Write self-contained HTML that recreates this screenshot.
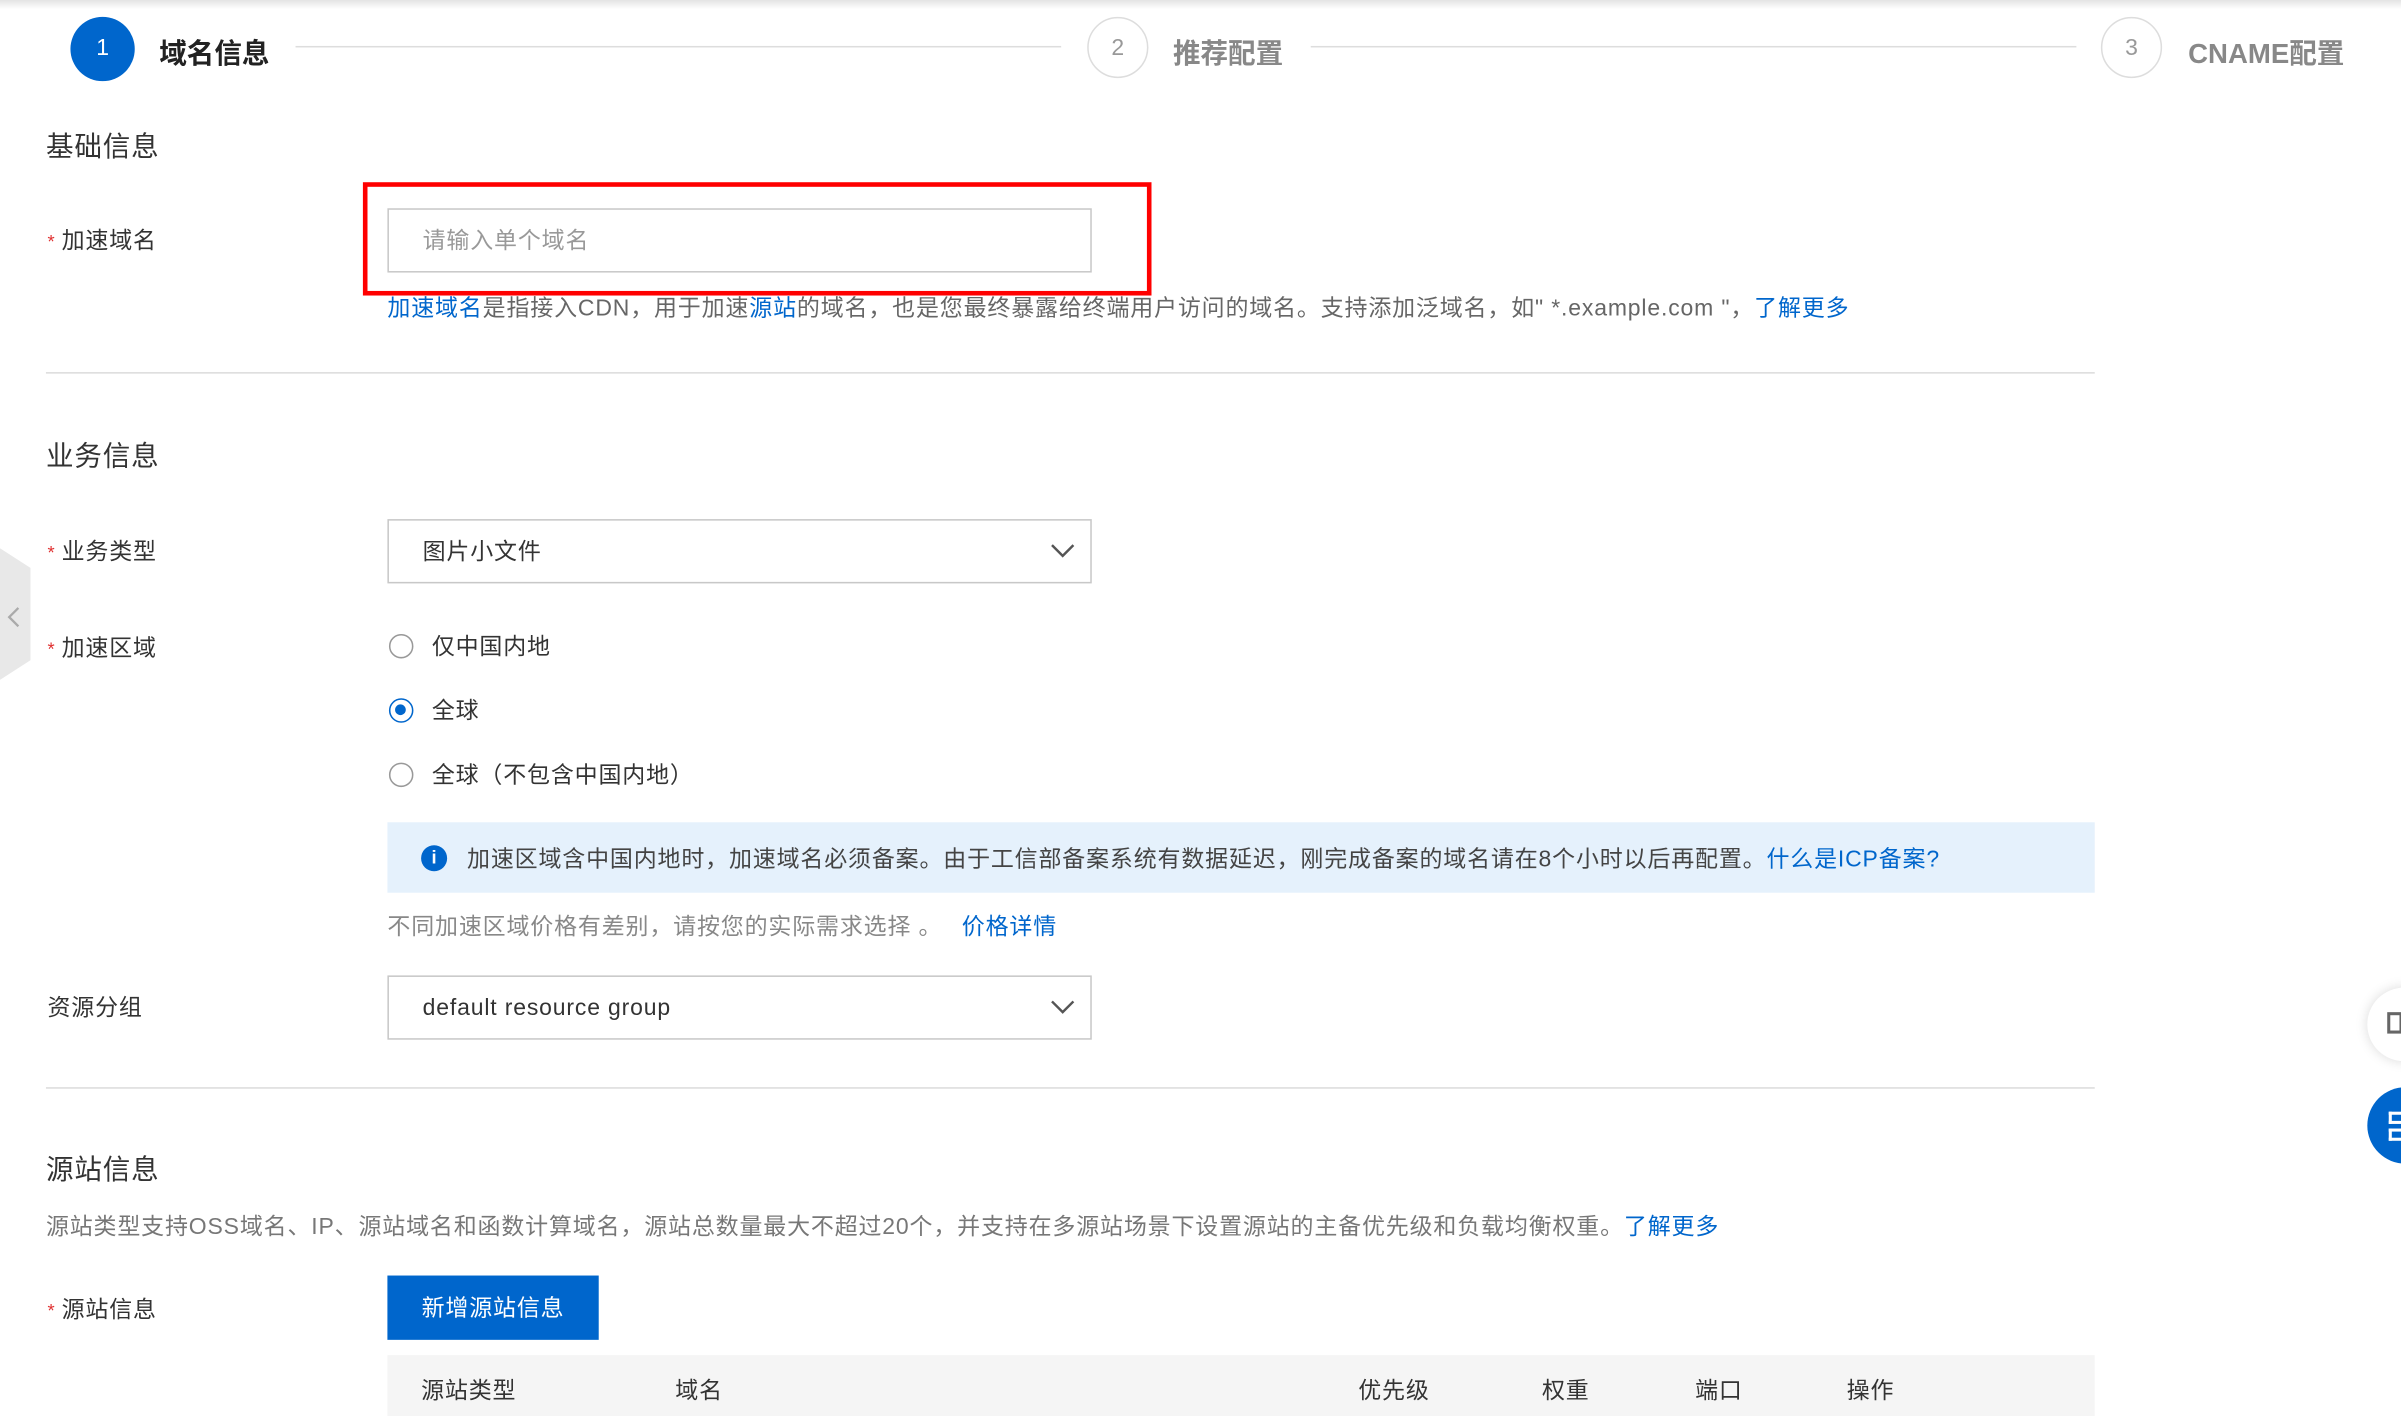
<!DOCTYPE html>
<html><head><meta charset="utf-8"><style>
html,body{margin:0;padding:0;width:2401px;height:1409px;overflow:hidden;background:#fff}
#w{position:absolute;left:0;top:0;width:1568px;height:920px;transform:scale(1.53125);transform-origin:0 0;font-family:"Liberation Sans","Noto Sans CJK SC",sans-serif;color:#333;font-size:15px;letter-spacing:.55px}
.a{position:absolute;white-space:nowrap}
.lbl{position:absolute;left:31px;font-size:15px;color:#333;line-height:20px}
.lbl b{color:#e03030;font-weight:normal;font-size:12px;margin-right:4px}
.h{position:absolute;left:30px;font-size:18px;color:#333;line-height:24px}
.box{position:absolute;left:253px;width:458px;height:40px;border:1px solid #c8c8c8;background:#fff}
.box span{position:absolute;left:22px;top:11px;line-height:20px}
.hr{position:absolute;left:30px;width:1338px;height:1px;background:#dcdcdc}
.rad{position:absolute;left:253px;width:16px;height:16px;border:1px solid #999;border-radius:50%;box-sizing:border-box;background:#fff}
.rt{position:absolute;left:282px;line-height:20px}
.blue{color:#0066cc}
.step{position:absolute;top:11px;width:40px;height:40px;border-radius:50%;box-sizing:border-box;border:1px solid #ddd;text-align:center;line-height:40px;color:#999;font-size:15px;letter-spacing:0}
.st{position:absolute;top:23px;font-size:18px;font-weight:bold;line-height:24px;color:#888;letter-spacing:0}
.ln{position:absolute;top:30px;height:1px;background:#ddd}
</style></head><body><div id="w">
<div style="position:absolute;left:0;top:0;width:1568px;height:6px;background:linear-gradient(#e4e4e4,#fff)"></div>
<div class="step" style="left:46px;background:#0066cc;border:none;color:#fff;width:42px;height:42px;line-height:42px">1</div>
<div class="st" style="left:104px;color:#222">域名信息</div>
<div class="ln" style="left:193px;width:500px"></div>
<div class="step" style="left:710px">2</div>
<div class="st" style="left:766px">推荐配置</div>
<div class="ln" style="left:856px;width:500px"></div>
<div class="step" style="left:1372px">3</div>
<div class="st" style="left:1429px">CNAME配置</div>

<div class="h" style="top:84px">基础信息</div>
<div class="lbl" style="top:148px"><b>*</b>加速域名</div>
<div class="box" style="top:136px;height:40px"><span style="color:#999">请输入单个域名</span></div>
<div style="position:absolute;left:237px;top:119px;width:509px;height:68px;border:3px solid #f00"></div>
<div class="a" style="left:253px;top:192px;color:#666;line-height:20px"><span class="blue">加速域名</span>是指接入CDN，用于加速<span class="blue">源站</span>的域名，也是您最终暴露给终端用户访问的域名。支持添加泛域名，如" *.example.com "，<span class="blue">了解更多</span></div>
<div class="hr" style="top:243px"></div>

<div class="h" style="top:286px">业务信息</div>
<div class="lbl" style="top:351px"><b>*</b>业务类型</div>
<div class="box" style="top:339px"><span>图片小文件</span><svg style="position:absolute;right:10px;top:13px" width="16" height="12" viewBox="0 0 16 12"><path d="M1 3l7 7 7-7" fill="none" stroke="#555" stroke-width="1.6"/></svg></div>
<div class="lbl" style="top:414px"><b>*</b>加速区域</div>
<div class="rad" style="top:414px;left:254px"></div><div class="rt" style="top:413px">仅中国内地</div>
<div class="rad" style="top:456px;left:254px;border:1.5px solid #0066cc"><div style="position:absolute;left:3px;top:3px;width:7px;height:7px;border-radius:50%;background:#0066cc"></div></div><div class="rt" style="top:455px">全球</div>
<div class="rad" style="top:498px;left:254px"></div><div class="rt" style="top:497px">全球（不包含中国内地）</div>
<div style="position:absolute;left:253px;top:537px;width:1115px;height:46px;background:#e5f1fc"></div>
<div style="position:absolute;left:275px;top:552px;width:17px;height:17px;border-radius:50%;background:#0066cc;color:#fff;font-size:12px;font-weight:bold;text-align:center;line-height:17px;letter-spacing:0">i</div>
<div class="a" style="left:305px;top:552px;line-height:20px;color:#444">加速区域含中国内地时，加速域名必须备案。由于工信部备案系统有数据延迟，刚完成备案的域名请在8个小时以后再配置。<span class="blue">什么是ICP备案?</span></div>
<div class="a" style="left:253px;top:596px;line-height:20px;color:#888">不同加速区域价格有差别，请按您的实际需求选择 。 <span class="blue" style="margin-left:8px">价格详情</span></div>
<div class="lbl" style="top:649px">资源分组</div>
<div class="box" style="top:637px"><span>default resource group</span><svg style="position:absolute;right:10px;top:13px" width="16" height="12" viewBox="0 0 16 12"><path d="M1 3l7 7 7-7" fill="none" stroke="#555" stroke-width="1.6"/></svg></div>
<div class="hr" style="top:710px"></div>

<div class="h" style="top:752px">源站信息</div>
<div class="a" style="left:30px;top:792px;line-height:20px;color:#777">源站类型支持OSS域名、IP、源站域名和函数计算域名，源站总数量最大不超过20个，并支持在多源站场景下设置源站的主备优先级和负载均衡权重。<span class="blue">了解更多</span></div>
<div class="lbl" style="top:846px"><b>*</b>源站信息</div>
<div style="position:absolute;left:253px;top:833px;width:138px;height:42px;background:#0066cc;color:#fff;text-align:center;line-height:44px">新增源站信息</div>
<div style="position:absolute;left:253px;top:885px;width:1115px;height:40px;background:#f5f5f5"></div>
<div class="a" style="left:275px;top:897px">源站类型</div>
<div class="a" style="left:441px;top:897px">域名</div>
<div class="a" style="left:887px;top:897px">优先级</div>
<div class="a" style="left:1007px;top:897px">权重</div>
<div class="a" style="left:1107px;top:897px">端口</div>
<div class="a" style="left:1206px;top:897px">操作</div>

<div style="position:absolute;left:0;top:358px;width:20px;height:86px;background:#e8e8e8;clip-path:polygon(0 0,100% 15%,100% 85%,0 100%)"></div>
<svg style="position:absolute;left:4px;top:396px" width="10" height="14"><path d="M8 1L2 7l6 6" fill="none" stroke="#aaa" stroke-width="1.5"/></svg>
<div style="position:absolute;left:1546px;top:645px;width:50px;height:48px;border-radius:24px;background:#fff;box-shadow:0 0 8px rgba(0,0,0,.15)"></div>
<div style="position:absolute;left:1559px;top:661px;width:10px;height:14px;border:2px solid #666;box-sizing:border-box"></div>
<div style="position:absolute;left:1546px;top:710px;width:50px;height:50px;border-radius:25px;background:#0066cc"></div>
<div style="position:absolute;left:1560px;top:726px;width:10px;height:8px;border:2px solid #fff;border-right:none;box-sizing:border-box"></div>
<div style="position:absolute;left:1560px;top:737px;width:10px;height:8px;border:2px solid #fff;border-right:none;box-sizing:border-box"></div>
</div></body></html>
